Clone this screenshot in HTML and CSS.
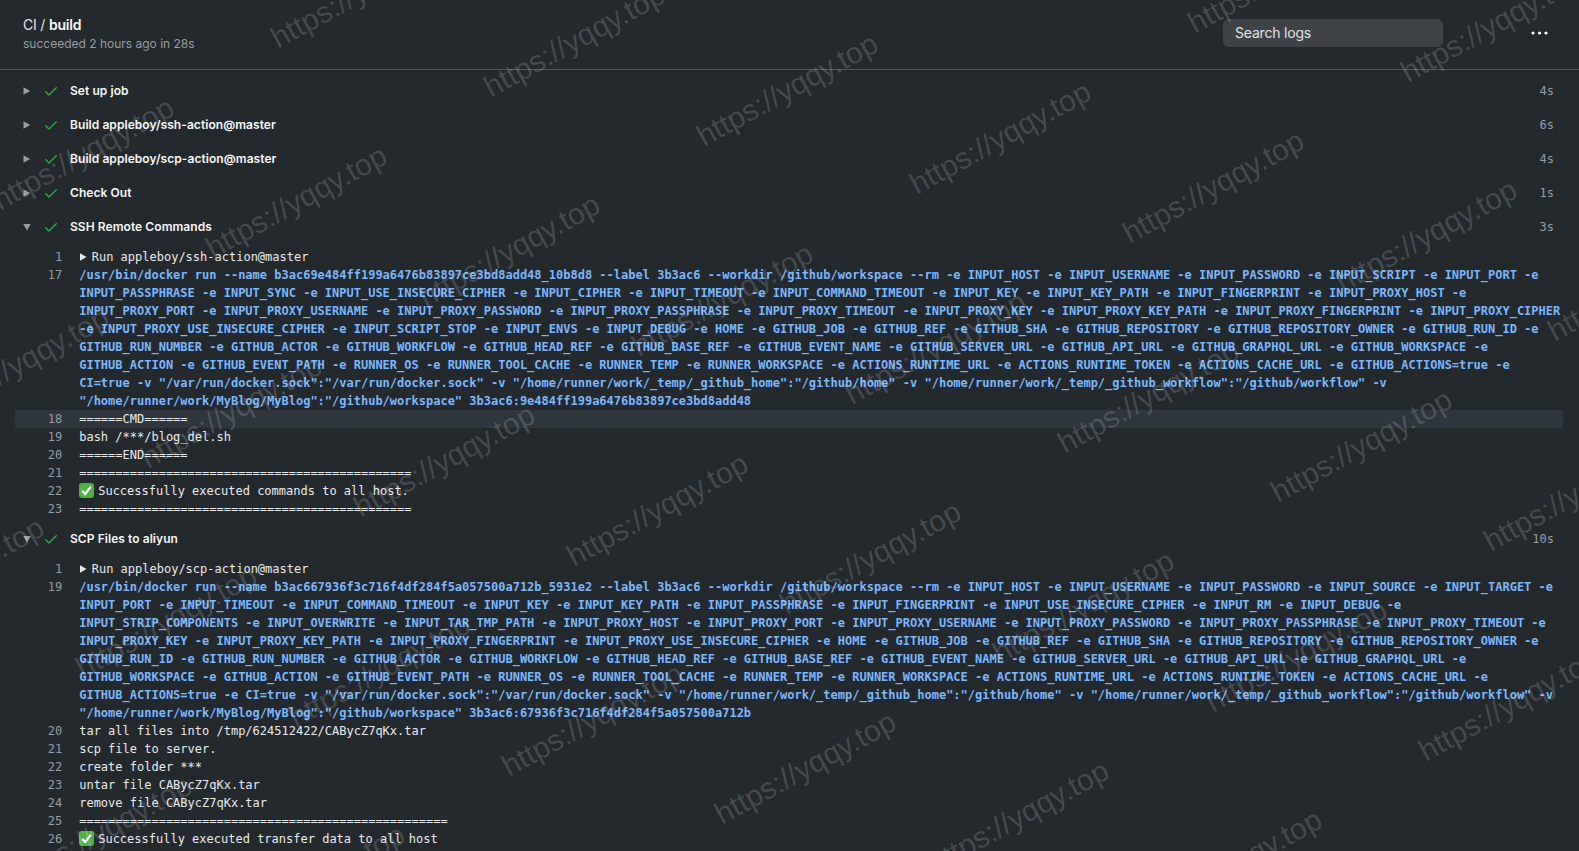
FILE: index.html
```html
<!DOCTYPE html>
<html lang="en">
<head>
<meta charset="utf-8">
<title>CI / build</title>
<link rel="stylesheet" href="styles.css">
</head>
<body>
<main class="page">
  <header class="top">
    <div class="heading">
      <div class="crumb">CI / <strong>build</strong></div>
      <div class="sub">succeeded 2 hours ago in 28s</div>
    </div>
    <div class="search">Search logs</div>
    <svg class="kebab" viewBox="0 0 17 4" width="17" height="4"><circle cx="2" cy="2" r="1.6"/><circle cx="8.5" cy="2" r="1.6"/><circle cx="15" cy="2" r="1.6"/></svg>
  </header>

  <section class="steps">
    <div class="step"><svg class="tri" viewBox="0 0 8 8" width="8" height="8"><path d="M0.5 0.3 7.2 4 0.5 7.7Z"/></svg><svg class="check" viewBox="0 0 16 16" width="16" height="16"><path d="M13.78 4.22a.75.75 0 0 1 0 1.06l-7.25 7.25a.75.75 0 0 1-1.06 0L2.22 9.28a.75.75 0 0 1 1.06-1.06L6 10.94l6.72-6.72a.75.75 0 0 1 1.06 0Z"/></svg><span class="name">Set up job</span><span class="dur">4s</span></div>
    <div class="step"><svg class="tri" viewBox="0 0 8 8" width="8" height="8"><path d="M0.5 0.3 7.2 4 0.5 7.7Z"/></svg><svg class="check" viewBox="0 0 16 16" width="16" height="16"><path d="M13.78 4.22a.75.75 0 0 1 0 1.06l-7.25 7.25a.75.75 0 0 1-1.06 0L2.22 9.28a.75.75 0 0 1 1.06-1.06L6 10.94l6.72-6.72a.75.75 0 0 1 1.06 0Z"/></svg><span class="name">Build appleboy/ssh-action@master</span><span class="dur">6s</span></div>
    <div class="step"><svg class="tri" viewBox="0 0 8 8" width="8" height="8"><path d="M0.5 0.3 7.2 4 0.5 7.7Z"/></svg><svg class="check" viewBox="0 0 16 16" width="16" height="16"><path d="M13.78 4.22a.75.75 0 0 1 0 1.06l-7.25 7.25a.75.75 0 0 1-1.06 0L2.22 9.28a.75.75 0 0 1 1.06-1.06L6 10.94l6.72-6.72a.75.75 0 0 1 1.06 0Z"/></svg><span class="name">Build appleboy/scp-action@master</span><span class="dur">4s</span></div>
    <div class="step"><svg class="tri" viewBox="0 0 8 8" width="8" height="8"><path d="M0.5 0.3 7.2 4 0.5 7.7Z"/></svg><svg class="check" viewBox="0 0 16 16" width="16" height="16"><path d="M13.78 4.22a.75.75 0 0 1 0 1.06l-7.25 7.25a.75.75 0 0 1-1.06 0L2.22 9.28a.75.75 0 0 1 1.06-1.06L6 10.94l6.72-6.72a.75.75 0 0 1 1.06 0Z"/></svg><span class="name">Check Out</span><span class="dur">1s</span></div>
    <div class="step"><svg class="tri" viewBox="0 0 8 8" width="8" height="8"><path d="M0.2 1 7.8 1 4 7.4Z"/></svg><svg class="check" viewBox="0 0 16 16" width="16" height="16"><path d="M13.78 4.22a.75.75 0 0 1 0 1.06l-7.25 7.25a.75.75 0 0 1-1.06 0L2.22 9.28a.75.75 0 0 1 1.06-1.06L6 10.94l6.72-6.72a.75.75 0 0 1 1.06 0Z"/></svg><span class="name">SSH Remote Commands</span><span class="dur">3s</span></div>

    <div class="log">
      <div class="line"><span class="num">1</span><span class="txt"><svg class="run" viewBox="0 0 8 8" width="8" height="8"><path d="M1 0.3 7.5 4 1 7.7Z"/></svg>Run appleboy/ssh-action@master</span></div>
      <div class="line"><span class="num">17</span><span class="txt cmd">/usr/bin/docker run --name b3ac69e484ff199a6476b83897ce3bd8add48_10b8d8 --label 3b3ac6 --workdir /github/workspace --rm -e INPUT_HOST -e INPUT_USERNAME -e INPUT_PASSWORD -e INPUT_SCRIPT -e INPUT_PORT -e INPUT_PASSPHRASE -e INPUT_SYNC -e INPUT_USE_INSECURE_CIPHER -e INPUT_CIPHER -e INPUT_TIMEOUT -e INPUT_COMMAND_TIMEOUT -e INPUT_KEY -e INPUT_KEY_PATH -e INPUT_FINGERPRINT -e INPUT_PROXY_HOST -e INPUT_PROXY_PORT -e INPUT_PROXY_USERNAME -e INPUT_PROXY_PASSWORD -e INPUT_PROXY_PASSPHRASE -e INPUT_PROXY_TIMEOUT -e INPUT_PROXY_KEY -e INPUT_PROXY_KEY_PATH -e INPUT_PROXY_FINGERPRINT -e INPUT_PROXY_CIPHER -e INPUT_PROXY_USE_INSECURE_CIPHER -e INPUT_SCRIPT_STOP -e INPUT_ENVS -e INPUT_DEBUG -e HOME -e GITHUB_JOB -e GITHUB_REF -e GITHUB_SHA -e GITHUB_REPOSITORY -e GITHUB_REPOSITORY_OWNER -e GITHUB_RUN_ID -e GITHUB_RUN_NUMBER -e GITHUB_ACTOR -e GITHUB_WORKFLOW -e GITHUB_HEAD_REF -e GITHUB_BASE_REF -e GITHUB_EVENT_NAME -e GITHUB_SERVER_URL -e GITHUB_API_URL -e GITHUB_GRAPHQL_URL -e GITHUB_WORKSPACE -e GITHUB_ACTION -e GITHUB_EVENT_PATH -e RUNNER_OS -e RUNNER_TOOL_CACHE -e RUNNER_TEMP -e RUNNER_WORKSPACE -e ACTIONS_RUNTIME_URL -e ACTIONS_RUNTIME_TOKEN -e ACTIONS_CACHE_URL -e GITHUB_ACTIONS=true -e CI=true -v "/var/run/docker.sock":"/var/run/docker.sock" -v "/home/runner/work/_temp/_github_home":"/github/home" -v "/home/runner/work/_temp/_github_workflow":"/github/workflow" -v "/home/runner/work/MyBlog/MyBlog":"/github/workspace" 3b3ac6:9e484ff199a6476b83897ce3bd8add48</span></div>
      <div class="line hl"><span class="num">18</span><span class="txt">======CMD======</span></div>
      <div class="line"><span class="num">19</span><span class="txt">bash /***/blog_del.sh</span></div>
      <div class="line"><span class="num">20</span><span class="txt">======END======</span></div>
      <div class="line"><span class="num">21</span><span class="txt">==============================================</span></div>
      <div class="line"><span class="num">22</span><span class="txt"><svg class="ok" viewBox="0 0 15 15" width="15" height="15"><rect width="15" height="15" rx="3" fill="#4fb043"/><path d="M3.2 7.8 6.2 11 11.8 3.6" fill="none" stroke="#fff" stroke-width="2.2"/></svg>Successfully executed commands to all host.</span></div>
      <div class="line"><span class="num">23</span><span class="txt">==============================================</span></div>
    </div>

    <div class="step"><svg class="tri" viewBox="0 0 8 8" width="8" height="8"><path d="M0.2 1 7.8 1 4 7.4Z"/></svg><svg class="check" viewBox="0 0 16 16" width="16" height="16"><path d="M13.78 4.22a.75.75 0 0 1 0 1.06l-7.25 7.25a.75.75 0 0 1-1.06 0L2.22 9.28a.75.75 0 0 1 1.06-1.06L6 10.94l6.72-6.72a.75.75 0 0 1 1.06 0Z"/></svg><span class="name">SCP Files to aliyun</span><span class="dur">10s</span></div>

    <div class="log">
      <div class="line"><span class="num">1</span><span class="txt"><svg class="run" viewBox="0 0 8 8" width="8" height="8"><path d="M1 0.3 7.5 4 1 7.7Z"/></svg>Run appleboy/scp-action@master</span></div>
      <div class="line"><span class="num">19</span><span class="txt cmd">/usr/bin/docker run --name b3ac667936f3c716f4df284f5a057500a712b_5931e2 --label 3b3ac6 --workdir /github/workspace --rm -e INPUT_HOST -e INPUT_USERNAME -e INPUT_PASSWORD -e INPUT_SOURCE -e INPUT_TARGET -e INPUT_PORT -e INPUT_TIMEOUT -e INPUT_COMMAND_TIMEOUT -e INPUT_KEY -e INPUT_KEY_PATH -e INPUT_PASSPHRASE -e INPUT_FINGERPRINT -e INPUT_USE_INSECURE_CIPHER -e INPUT_RM -e INPUT_DEBUG -e INPUT_STRIP_COMPONENTS -e INPUT_OVERWRITE -e INPUT_TAR_TMP_PATH -e INPUT_PROXY_HOST -e INPUT_PROXY_PORT -e INPUT_PROXY_USERNAME -e INPUT_PROXY_PASSWORD -e INPUT_PROXY_PASSPHRASE -e INPUT_PROXY_TIMEOUT -e INPUT_PROXY_KEY -e INPUT_PROXY_KEY_PATH -e INPUT_PROXY_FINGERPRINT -e INPUT_PROXY_USE_INSECURE_CIPHER -e HOME -e GITHUB_JOB -e GITHUB_REF -e GITHUB_SHA -e GITHUB_REPOSITORY -e GITHUB_REPOSITORY_OWNER -e GITHUB_RUN_ID -e GITHUB_RUN_NUMBER -e GITHUB_ACTOR -e GITHUB_WORKFLOW -e GITHUB_HEAD_REF -e GITHUB_BASE_REF -e GITHUB_EVENT_NAME -e GITHUB_SERVER_URL -e GITHUB_API_URL -e GITHUB_GRAPHQL_URL -e GITHUB_WORKSPACE -e GITHUB_ACTION -e GITHUB_EVENT_PATH -e RUNNER_OS -e RUNNER_TOOL_CACHE -e RUNNER_TEMP -e RUNNER_WORKSPACE -e ACTIONS_RUNTIME_URL -e ACTIONS_RUNTIME_TOKEN -e ACTIONS_CACHE_URL -e GITHUB_ACTIONS=true -e CI=true -v "/var/run/docker.sock":"/var/run/docker.sock" -v "/home/runner/work/_temp/_github_home":"/github/home" -v "/home/runner/work/_temp/_github_workflow":"/github/workflow" -v "/home/runner/work/MyBlog/MyBlog":"/github/workspace" 3b3ac6:67936f3c716f4df284f5a057500a712b</span></div>
      <div class="line"><span class="num">20</span><span class="txt">tar all files into /tmp/624512422/CABycZ7qKx.tar</span></div>
      <div class="line"><span class="num">21</span><span class="txt">scp file to server.</span></div>
      <div class="line"><span class="num">22</span><span class="txt">create folder ***</span></div>
      <div class="line"><span class="num">23</span><span class="txt">untar file CABycZ7qKx.tar</span></div>
      <div class="line"><span class="num">24</span><span class="txt">remove file CABycZ7qKx.tar</span></div>
      <div class="line"><span class="num">25</span><span class="txt">===================================================</span></div>
      <div class="line"><span class="num">26</span><span class="txt"><svg class="ok" viewBox="0 0 15 15" width="15" height="15"><rect width="15" height="15" rx="3" fill="#4fb043"/><path d="M3.2 7.8 6.2 11 11.8 3.6" fill="none" stroke="#fff" stroke-width="2.2"/></svg>Successfully executed transfer data to all host</span></div>
      <div class="line"><span class="num">27</span><span class="txt">===================================================</span></div>
    </div>
  </section>

  <svg class="marks" width="1579" height="851" aria-hidden="true">
    <text transform="translate(1195 34) rotate(-28.8)">https://yqqy.top</text>
    <text transform="translate(1408 83) rotate(-28.8)">https://yqqy.top</text>
    <text transform="translate(278 49) rotate(-28.8)">https://yqqy.top</text>
    <text transform="translate(491 98) rotate(-28.8)">https://yqqy.top</text>
    <text transform="translate(704 147) rotate(-28.8)">https://yqqy.top</text>
    <text transform="translate(917 195) rotate(-28.8)">https://yqqy.top</text>
    <text transform="translate(1130 244) rotate(-28.8)">https://yqqy.top</text>
    <text transform="translate(1343 293) rotate(-28.8)">https://yqqy.top</text>
    <text transform="translate(1555 342) rotate(-28.8)">https://yqqy.top</text>
    <text transform="translate(0 211) rotate(-28.8)">https://yqqy.top</text>
    <text transform="translate(213 259) rotate(-28.8)">https://yqqy.top</text>
    <text transform="translate(426 308) rotate(-28.8)">https://yqqy.top</text>
    <text transform="translate(639 357) rotate(-28.8)">https://yqqy.top</text>
    <text transform="translate(852 405) rotate(-28.8)">https://yqqy.top</text>
    <text transform="translate(1065 454) rotate(-28.8)">https://yqqy.top</text>
    <text transform="translate(1278 503) rotate(-28.8)">https://yqqy.top</text>
    <text transform="translate(1491 552) rotate(-28.8)">https://yqqy.top</text>
    <text transform="translate(-65 421) rotate(-28.8)">https://yqqy.top</text>
    <text transform="translate(148 469) rotate(-28.8)">https://yqqy.top</text>
    <text transform="translate(361 518) rotate(-28.8)">https://yqqy.top</text>
    <text transform="translate(574 567) rotate(-28.8)">https://yqqy.top</text>
    <text transform="translate(787 615) rotate(-28.8)">https://yqqy.top</text>
    <text transform="translate(1000 664) rotate(-28.8)">https://yqqy.top</text>
    <text transform="translate(1213 713) rotate(-28.8)">https://yqqy.top</text>
    <text transform="translate(1426 762) rotate(-28.8)">https://yqqy.top</text>
    <text transform="translate(-130 631) rotate(-28.8)">https://yqqy.top</text>
    <text transform="translate(83 679) rotate(-28.8)">https://yqqy.top</text>
    <text transform="translate(296 728) rotate(-28.8)">https://yqqy.top</text>
    <text transform="translate(509 777) rotate(-28.8)">https://yqqy.top</text>
    <text transform="translate(722 825) rotate(-28.8)">https://yqqy.top</text>
    <text transform="translate(935 874) rotate(-28.8)">https://yqqy.top</text>
    <text transform="translate(1148 923) rotate(-28.8)">https://yqqy.top</text>
    <text transform="translate(18 889) rotate(-28.8)">https://yqqy.top</text>
    <text transform="translate(231 938) rotate(-28.8)">https://yqqy.top</text>
  </svg>
</main>
</body>
</html>
```
FILE: styles.css
```css
* { box-sizing: border-box; }
html, body { margin: 0; height: 100%; overflow: hidden; background: #24292e; }
.page {
  position: relative;
  height: 851px;
  overflow: hidden;
  background: #24292e;
  color: #e1e4e8;
  font-family: Inter, "Liberation Sans", sans-serif;
}
.top {
  display: flex;
  align-items: center;
  height: 70px;
  padding: 0 31px 3px 23px;
  border-bottom: 1px solid #54585e;
}
.heading { flex: 1; padding-top: 2px; }
.crumb { font-size: 14px; line-height: 20px; letter-spacing: -.2px; color: #e1e4e8; }
.crumb strong { font-weight: 600; color: #f6f8fa; }
.sub { font-size: 12px; line-height: 18px; color: #959da5; }
.search {
  width: 220px;
  height: 28px;
  padding: 0 12px;
  border-radius: 6px;
  background: #3f4347;
  font-size: 14px;
  line-height: 28px;
  letter-spacing: -.2px;
  color: #e1e4e8;
}
.kebab { margin-left: 88px; fill: #fff; }
.steps { padding-top: 4px; }
.step { display: flex; align-items: center; height: 34px; padding: 0 25px 0 23px; }
.tri { fill: #959da5; flex: none; }
.check { fill: #28a745; flex: none; margin-left: 12px; }
.name { flex: 1; margin-left: 11px; padding-bottom: 2px; font-size: 12px; font-weight: 600; letter-spacing: .06px; color: #f6f8fa; }
.dur { font: 12px/18px "DejaVu Sans Mono", monospace; color: #959da5; }
.log { padding: 4px 0; font: 12px/18px "DejaVu Sans Mono", monospace; }
.line { display: flex; margin: 0 16px 0 15px; }
.line.hl { background: #2f363d; border-radius: 2px; }
.num { flex: none; width: 47.2px; text-align: right; color: #959da5; }
.txt { flex: 1; margin-left: 17px; color: #e8ebee; white-space: pre-wrap; min-width: 0; }
.cmd { color: #79b8ff; font-weight: 700; }
.run { fill: #e8ebee; margin-right: 4.5px; }
.ok { vertical-align: -3px; margin-right: 4px; }
.marks { position: absolute; left: 0; top: 0; pointer-events: none; }
.marks text { font: 30px "Liberation Sans", sans-serif; fill: #ffffff; fill-opacity: .16; }
```
